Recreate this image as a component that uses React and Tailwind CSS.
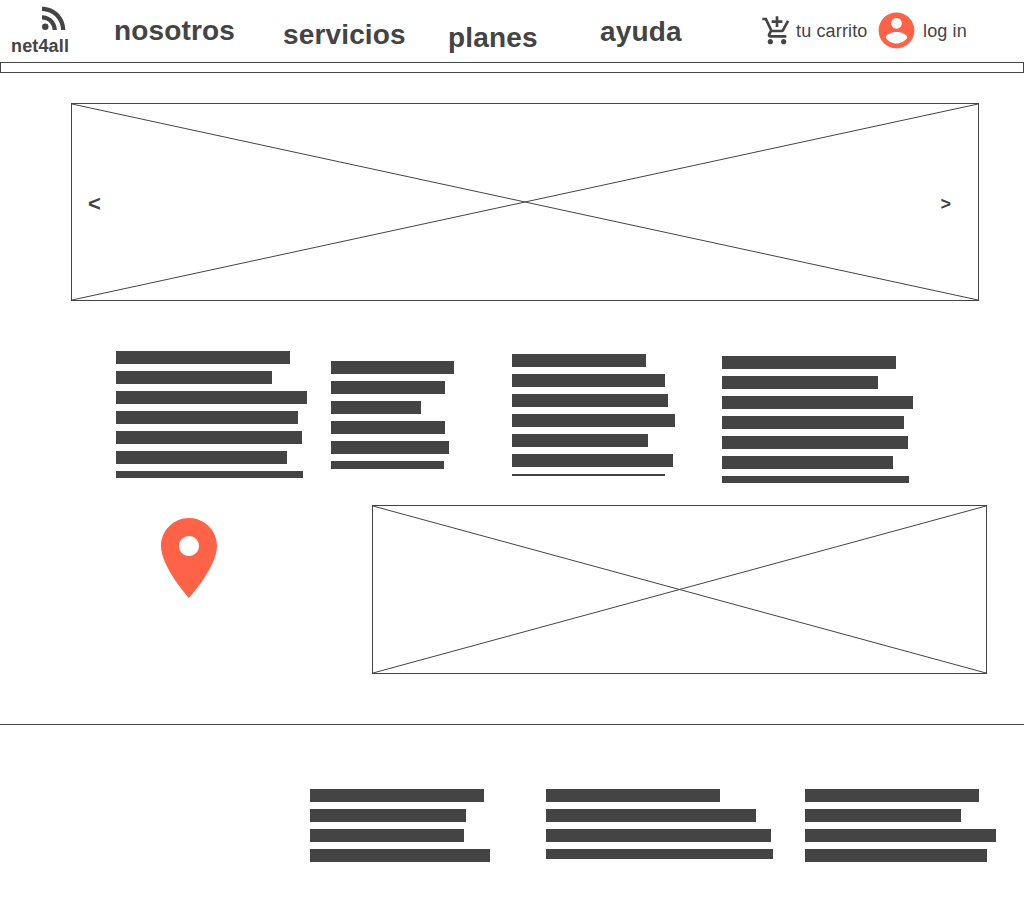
import React from "react";

const service = [174, 156, 191, 182, 186, 171, 187];

function TextBlock({ widths, className }) {
  return (
    <div className={`flex shrink-0 flex-col gap-[7px] overflow-hidden ${className}`}>
      {widths.map((w, i) => (
        <div key={i} className="h-[13px] shrink-0 bg-[#444]" style={{ width: w }} />
      ))}
    </div>
  );
}

function Cross() {
  return (
    <svg className="absolute inset-0 h-full w-full" stroke="#444" strokeWidth="1">
      <line x1="0" y1="0" x2="100%" y2="100%" />
      <line x1="0" y1="100%" x2="100%" y2="0" />
    </svg>
  );
}

function Icon({ d, className, children }) {
  return (
    <svg viewBox="0 0 24 24" fill="currentColor" className={`shrink-0 ${className}`}>
      {children}
      <path d={d} />
    </svg>
  );
}

export default function App() {
  return (
    <div className="h-[902px] w-[1024px] overflow-hidden bg-white font-['Liberation_Sans',Arial,sans-serif] text-[#444]">
      <header className="flex h-[62px] items-start tracking-[0.15px] whitespace-nowrap">
        <div className="w-[114px] shrink-0 pl-[11px]">
          <Icon
            className="ml-[25px] block size-9"
            d="M4 4.44v2.83c7.03 0 12.73 5.7 12.73 12.73h2.83c0-8.59-6.97-15.56-15.56-15.56zm0 5.66v2.83c3.9 0 7.07 3.17 7.07 7.07h2.83c0-5.47-4.43-9.9-9.9-9.9z"
          >
            <circle cx="6.18" cy="17.82" r="2.18" />
          </Icon>
          <div className="text-[18px] leading-5 font-bold">net4all</div>
        </div>
        <nav className="flex w-[647px] shrink-0 items-start text-[28px] leading-8 font-bold">
          <a className="w-[169px] pt-[15px]">nosotros</a>
          <a className="w-[165px] pt-[19px]">servicios</a>
          <a className="w-[152px] pt-[22px]">planes</a>
          <a className="pt-4">ayuda</a>
        </nav>
        <Icon
          className="mt-[15px] size-8"
          d="M11 9h2V6h3V4h-3V1h-2v3H8v2h3v3zm-4 9c-1.1 0-1.99.9-1.99 2S5.9 22 7 22s2-.9 2-2-.9-2-2-2zm10 0c-1.1 0-1.99.9-1.99 2s.89 2 1.99 2 2-.9 2-2-.9-2-2-2zm-9.83-3.25l.03-.12.9-1.63h7.45c.75 0 1.41-.41 1.75-1.03l3.86-7.01L19.42 4h-.01l-1.1 2-2.76 5H8.53l-.13-.27L6.16 6l-.95-2-.94-2H1v2h2l3.6 7.59-1.35 2.45c-.16.28-.25.61-.25.96 0 1.1.9 2 2 2h12v-2H7.42c-.13 0-.25-.11-.25-.25z"
        />
        <span className="ml-[3px] w-[79px] pt-[21px] text-[18px] leading-5">tu carrito</span>
        <Icon
          className="mt-[9px] size-[43px] text-[#ff6347]"
          d="M12 2C6.48 2 2 6.48 2 12s4.48 10 10 10 10-4.48 10-10S17.52 2 12 2zm0 3c1.66 0 3 1.34 3 3s-1.34 3-3 3-3-1.34-3-3 1.34-3 3-3zm0 14.2c-2.5 0-4.71-1.28-6-3.22.03-1.99 4-3.08 6-3.08 1.99 0 5.97 1.09 6 3.08-1.29 1.94-3.5 3.22-6 3.22z"
        />
        <span className="ml-[5px] pt-[21px] text-[18px] leading-5">log in</span>
      </header>
      <div className="h-[11px] border border-[#444]" />

      <section className="relative mt-[30px] ml-[71px] flex h-[198px] w-[908px] justify-between border border-[#444] pr-[27px] pl-4 font-bold">
        <Cross />
        <button className="relative mt-[88px] h-6 text-[22px] leading-6">&lt;</button>
        <button className="relative mt-[90px] h-5 text-[18px] leading-5">&gt;</button>
      </section>

      <section className="mt-[50px] flex h-[154px] items-start pl-[116px]">
        <TextBlock widths={service} className="h-[127px] w-[215px]" />
        <TextBlock widths={[123, 114, 90, 114, 118, 113]} className="mt-[10px] h-[108px] w-[181px]" />
        <TextBlock widths={[134, 153, 156, 163, 136, 161, 153]} className="mt-[3px] h-[122px] w-[210px]" />
        <TextBlock widths={service} className="mt-[5px] h-[127px] w-[191px]" />
      </section>

      <section className="flex h-[220px] items-start border-b border-[#444] pl-[141px]">
        <Icon
          className="mt-[5px] size-24 text-[#ff6347]"
          d="M12 2C8.13 2 5 5.13 5 9c0 5.25 7 13 7 13s7-7.75 7-13c0-3.87-3.13-7-7-7zm0 9.5c-1.38 0-2.5-1.12-2.5-2.5s1.12-2.5 2.5-2.5 2.5 1.12 2.5 2.5-1.12 2.5-2.5 2.5z"
        />
        <div className="relative ml-[135px] h-[169px] w-[615px] border border-[#444]">
          <Cross />
        </div>
      </section>

      <footer className="flex items-start pt-16 pl-[310px]">
        <TextBlock widths={[174, 156, 154, 180]} className="h-[73px] w-[236px]" />
        <TextBlock widths={[174, 210, 225, 227]} className="h-[70px] w-[259px]" />
        <TextBlock widths={[174, 156, 191, 182]} className="h-[73px] w-[191px]" />
      </footer>
    </div>
  );
}
